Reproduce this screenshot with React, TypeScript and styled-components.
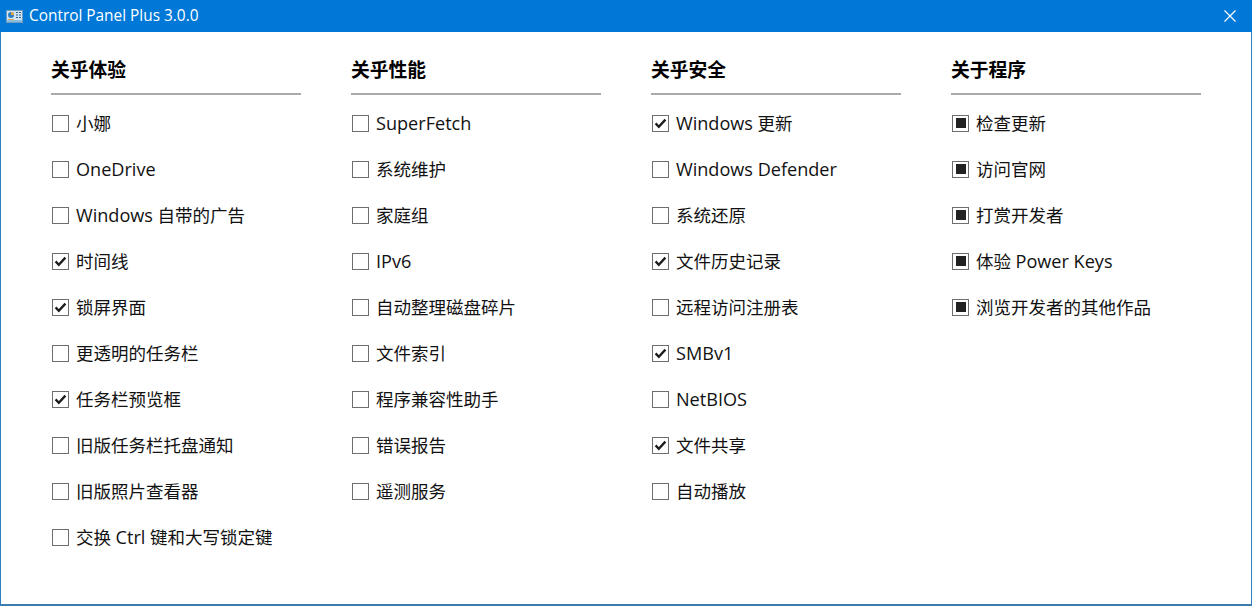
import { createGlobalStyle, styled } from "styled-components";

type Mark = "none" | "check" | "square";

interface Item {
  label: string;
  mark?: Mark;
}

interface Group {
  title: string;
  items: Item[];
}

const groups: Group[] = [
  {
    title: "关乎体验",
    items: [
      { label: "小娜" },
      { label: "OneDrive" },
      { label: "Windows 自带的广告" },
      { label: "时间线", mark: "check" },
      { label: "锁屏界面", mark: "check" },
      { label: "更透明的任务栏" },
      { label: "任务栏预览框", mark: "check" },
      { label: "旧版任务栏托盘通知" },
      { label: "旧版照片查看器" },
      { label: "交换 Ctrl 键和大写锁定键" },
    ],
  },
  {
    title: "关乎性能",
    items: [
      { label: "SuperFetch" },
      { label: "系统维护" },
      { label: "家庭组" },
      { label: "IPv6" },
      { label: "自动整理磁盘碎片" },
      { label: "文件索引" },
      { label: "程序兼容性助手" },
      { label: "错误报告" },
      { label: "遥测服务" },
    ],
  },
  {
    title: "关乎安全",
    items: [
      { label: "Windows 更新", mark: "check" },
      { label: "Windows Defender" },
      { label: "系统还原" },
      { label: "文件历史记录", mark: "check" },
      { label: "远程访问注册表" },
      { label: "SMBv1", mark: "check" },
      { label: "NetBIOS" },
      { label: "文件共享", mark: "check" },
      { label: "自动播放" },
    ],
  },
  {
    title: "关于程序",
    items: [
      { label: "检查更新", mark: "square" },
      { label: "访问官网", mark: "square" },
      { label: "打赏开发者", mark: "square" },
      { label: "体验 Power Keys", mark: "square" },
      { label: "浏览开发者的其他作品", mark: "square" },
    ],
  },
];

const AppIcon = () => (
  <svg width="17" height="13" viewBox="0 0 17 13" aria-hidden="true">
    <rect x="0.5" y="0.5" width="16" height="12" fill="#cfe4f5" stroke="#6d9cc0" />
    <rect x="1" y="10" width="15" height="2" fill="#8fbcdc" />
    <circle cx="5" cy="5" r="3" fill="#2f7fc4" />
    <path d="M5 5V2a3 3 0 0 1 3 3z" fill="#e8a33a" />
    <path d="M10 2.5h2M13 2.5h2M10 5h2M13 5h2M10 7.5h2M13 7.5h2" stroke="#34618a" />
    <path d="M2 9.5h6" stroke="#e0b050" />
  </svg>
);

const CloseIcon = () => (
  <svg width="12" height="12" viewBox="0 0 12 12" aria-hidden="true">
    <path d="M0.5 0.5l11 11M11.5 0.5l-11 11" stroke="#fff" strokeWidth="1.2" fill="none" />
  </svg>
);

const CheckIcon = () => (
  <svg width="13" height="13" viewBox="0 0 13 13" aria-hidden="true">
    <path d="M1.6 6.4l3.2 3.4 6.6-7.2" stroke="#1c1c1c" strokeWidth="2.3" fill="none" />
  </svg>
);

// Latin runs sit a little larger than the CJK glyphs beside them
const renderLabel = (label: string) =>
  label.split(/([A-Za-z0-9]+(?: [A-Za-z0-9]+)*)/).map((part, index) =>
    /[A-Za-z0-9]/.test(part) ? <StLatin key={index}>{part}</StLatin> : part,
  );

const App = () => {
  return (
    <>
      <GlobalStyle />
      <StWindow>
        <StTitleBar>
          <StTitleLeft>
            <AppIcon />
            <StTitleText>Control Panel Plus 3.0.0</StTitleText>
          </StTitleLeft>
          <StCloseButton>
            <CloseIcon />
          </StCloseButton>
        </StTitleBar>
        <StContent>
          {groups.map((group) => (
            <StColumn key={group.title}>
              <StHeading>{group.title}</StHeading>
              <StList>
                {group.items.map((item) => (
                  <StRow key={item.label}>
                    <StBox>
                      {item.mark === "check" && <CheckIcon />}
                      {item.mark === "square" && <StSquare />}
                    </StBox>
                    <StLabel>{renderLabel(item.label)}</StLabel>
                  </StRow>
                ))}
              </StList>
            </StColumn>
          ))}
        </StContent>
      </StWindow>
    </>
  );
};

export default App;

const GlobalStyle = createGlobalStyle`
  html, body {
    margin: 0;
    padding: 0;
    background: #fff;
  }
  * {
    box-sizing: border-box;
  }
  body {
    font-family: "Open Sans", "Noto Sans", "Noto Sans CJK SC", sans-serif;
  }
`;

const StWindow = styled.div`
  width: 1252px;
  height: 606px;
  display: flex;
  flex-direction: column;
  background: #fff;
  border-left: 1px solid #2f7fc4;
  border-right: 1px solid #2f7fc4;
  border-bottom: 2px solid #3a7cae;
`;

const StTitleBar = styled.div`
  height: 32px;
  margin: 0 -1px;
  flex-shrink: 0;
  display: flex;
  align-items: center;
  justify-content: space-between;
  background: #0078d7;
  color: #fff;
  padding-left: 6px;
`;

const StTitleLeft = styled.div`
  display: flex;
  align-items: center;
  gap: 6px;
`;

const StTitleText = styled.span`
  font-size: 15.4px;
  line-height: 32px;
`;

const StCloseButton = styled.div`
  width: 44px;
  height: 32px;
  display: flex;
  align-items: center;
  justify-content: center;
`;

const StContent = styled.div`
  display: grid;
  grid-template-columns: repeat(4, 250px);
  column-gap: 50px;
  padding: 20px 0 0 50px;
`;

const StColumn = styled.section`
  display: flex;
  flex-direction: column;
`;

const StHeading = styled.h2`
  margin: 0;
  height: 43px;
  font-size: 18.8px;
  font-weight: 700;
  line-height: 37px;
  color: #000;
  border-bottom: 2px solid #aaa;
`;

const StList = styled.div`
  display: flex;
  flex-direction: column;
  padding-top: 5px;
`;

const StRow = styled.div`
  height: 46px;
  display: flex;
  align-items: center;
  padding-left: 1px;
  gap: 7px;
`;

const StBox = styled.span`
  width: 17px;
  height: 17px;
  flex-shrink: 0;
  display: flex;
  align-items: center;
  justify-content: center;
  background: #fff;
  border: 1px solid #6e6e6e;
`;

const StSquare = styled.span`
  width: 10px;
  height: 10px;
  background: #222;
`;

const StLabel = styled.span`
  font-size: 17.5px;
  line-height: 24px;
  color: #111;
  white-space: nowrap;
`;

const StLatin = styled.span`
  font-size: 18.1px;
`;
